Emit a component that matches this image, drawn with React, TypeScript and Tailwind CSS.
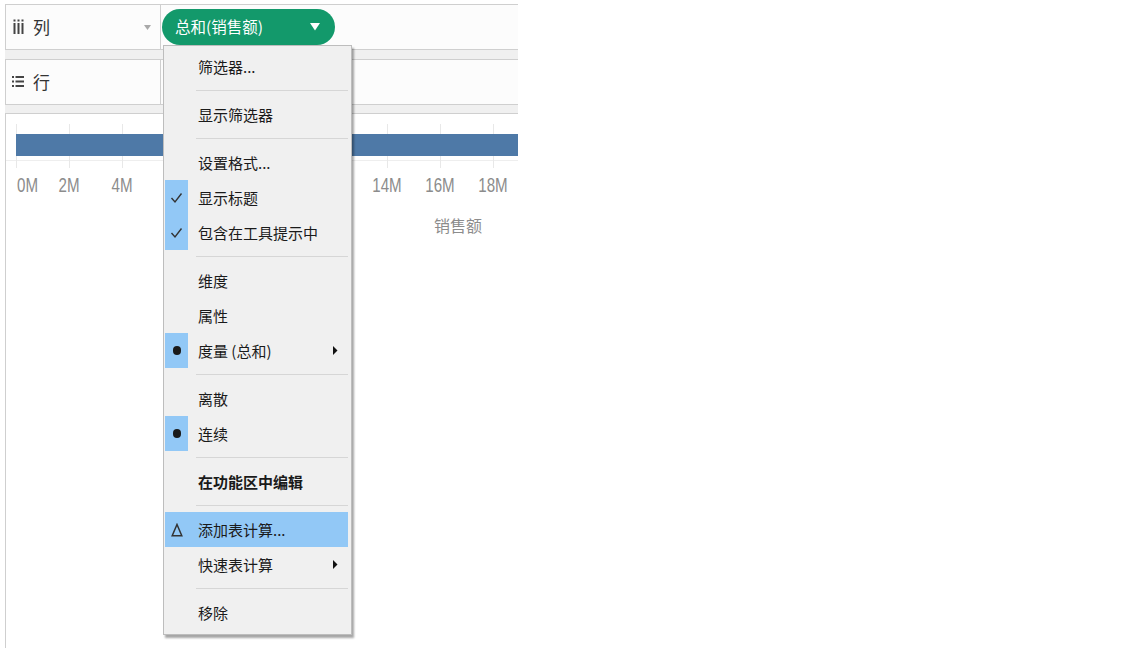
import { ReactNode } from 'react';

const FONT = "font-['Noto_Sans_CJK_SC','Noto_Sans',sans-serif]";
const ticks = [0, 2, 4, 6, 8, 10, 12, 14, 16, 18];
// labels for 6M-12M sit under the open menu
const shownTicks = [0, 2, 4, 14, 16, 18];

function ColumnsIcon() {
  return (
    <svg width="11" height="16" viewBox="0 0 11 16" className="shrink-0">
      {[0, 4, 8].map((x) => (
        <g key={x} fill="#444">
          <rect x={x + 0.5} y="0.5" width="2" height="2" />
          <rect x={x + 0.5} y="4" width="2" height="11" />
        </g>
      ))}
    </svg>
  );
}

function RowsIcon() {
  return (
    <svg width="12" height="12" viewBox="0 0 12 12" className="shrink-0">
      {[1, 5.5, 10].map((y) => (
        <g key={y} fill="#444">
          <rect x="0" y={y - 1} width="2" height="2" />
          <rect x="3.5" y={y - 1} width="8.5" height="2" />
        </g>
      ))}
    </svg>
  );
}

function Check() {
  return (
    <svg width="13" height="12" viewBox="0 0 13 12">
      <path d="M1.5 6 L5 10 L11.5 1.5" fill="none" stroke="#333" strokeWidth="1.4" />
    </svg>
  );
}

function Dot() {
  return <span className="block w-[8px] h-[9px] rounded-full bg-[#1a1a1a]" />;
}

function Delta() {
  return (
    <svg width="12" height="14" viewBox="0 0 12 14">
      <path d="M6 1.5 L10.8 12.8 L1.2 12.8 Z" fill="none" stroke="#333" strokeWidth="1.5" strokeLinejoin="miter" />
    </svg>
  );
}

function SubArrow() {
  return (
    <svg width="5" height="9" viewBox="0 0 5 9" className="ml-auto mr-[10px]">
      <path d="M0 0 L4.5 4.5 L0 9 Z" fill="#111" />
    </svg>
  );
}

interface ItemProps {
  label: string;
  icon?: ReactNode;
  sub?: boolean;
  bold?: boolean;
  active?: boolean;
}

function Item({ label, icon, sub, bold, active }: ItemProps) {
  return (
    <div className={`h-[35px] flex items-center mr-[3px] ${active ? 'bg-[#92c8f6]' : ''}`}>
      <div className={`w-[23px] h-full flex items-center justify-center ${icon ? 'bg-[#92c8f6]' : ''}`}>
        {icon}
      </div>
      <span className={`ml-[10px] text-[15px] leading-none text-[#1a1a1a] ${bold ? 'font-bold' : ''}`}>{label}</span>
      {sub && <SubArrow />}
    </div>
  );
}

function Separator() {
  return (
    <div className="h-[13px] flex items-center pl-[31px] pr-[3px]">
      <div className="w-full border-t border-[#d6d6d6]" />
    </div>
  );
}

function ContextMenu() {
  return (
    <div className={`absolute left-[163px] top-[45px] w-[189px] h-[590px] bg-[#f0f0f0] border border-[#bdbdbd] pl-[1px] pt-[3px] shadow-[2px_3px_2px_rgba(0,0,0,0.35)] ${FONT}`}>
      <Item label="筛选器..." />
      <Separator />
      <Item label="显示筛选器" />
      <Separator />
      <Item label="设置格式..." />
      <Item label="显示标题" icon={<Check />} />
      <Item label="包含在工具提示中" icon={<Check />} />
      <Separator />
      <Item label="维度" />
      <Item label="属性" />
      <Item label="度量 (总和)" icon={<Dot />} sub />
      <Separator />
      <Item label="离散" />
      <Item label="连续" icon={<Dot />} />
      <Separator />
      <Item label="在功能区中编辑" bold />
      <Separator />
      <Item label="添加表计算..." icon={<Delta />} active />
      <Item label="快速表计算" sub />
      <Separator />
      <Item label="移除" />
    </div>
  );
}

export default function App() {
  return (
    <div className={`relative w-[1145px] h-[648px] bg-white overflow-hidden ${FONT}`}>
      <div className="ml-[5px] mt-[4px] w-[513px] h-[644px] flex flex-col bg-[#f0f0f0]">
        {/* Columns shelf */}
        <div className="h-[46px] flex items-center bg-[#fcfcfc] border border-r-0 border-[#cfcfcf]">
          <div className="w-[155px] h-full flex items-center border-r border-[#cfcfcf] pl-[7px] pr-[9px]">
            <ColumnsIcon />
            <span className="ml-[9px] text-[17px] text-[#333]">列</span>
            <svg width="7" height="5" viewBox="0 0 7 5" className="ml-auto">
              <path d="M0 0 L7 0 L3.5 5 Z" fill="#a9a9a9" />
            </svg>
          </div>
          <div className="ml-[1px] w-[173px] h-[36px] rounded-full bg-[#13996b] flex items-center pl-[13px] pr-[15px]">
            <span className="text-[15.5px] text-white leading-none">总和(销售额)</span>
            <svg width="10" height="8" viewBox="0 0 10 8" className="ml-auto">
              <path d="M0 0 L10 0 L5 7.5 Z" fill="#fff" />
            </svg>
          </div>
        </div>
        <div className="h-[9px]" />
        {/* Rows shelf */}
        <div className="h-[46px] flex items-center bg-[#fcfcfc] border border-r-0 border-[#cfcfcf]">
          <div className="w-[155px] h-full flex items-center border-r border-[#cfcfcf] pl-[6px]">
            <RowsIcon />
            <span className="ml-[9px] text-[17px] text-[#333]">行</span>
          </div>
        </div>
        <div className="h-[8px]" />
        {/* Chart pane */}
        <div className="flex-1 bg-white border-l border-t border-[#cfcfcf] relative">
          <div className="absolute left-0 right-0 top-[46px] border-t border-[#eeeeee]" />
          {ticks.map((t, i) => (
            <div
              key={t}
              className="absolute top-[10px] h-[44px] border-l border-[#e8e8e8]"
              style={{ left: 10 + 53 * i }}
            />
          ))}
          <div className="relative mt-[20px] ml-[10px] h-[22px] bg-[#4e79a7]" />
          <div className="relative h-[42px]">
            {shownTicks.map((t) => (
              <span
                key={t}
                className={`absolute top-[18px] font-['Liberation_Sans',sans-serif] text-[21px] leading-none text-[#8c8c8c] scale-x-[0.72] whitespace-nowrap ${t === 0 ? 'origin-left' : '-translate-x-1/2 origin-center'}`}
                style={{ left: t === 0 ? 11 : 10 + 53 * (t / 2) }}
              >
                {t}M
              </span>
            ))}
          </div>
          <div className="ml-[428px] mt-[19px] text-[16px] leading-none text-[#8c8c8c]">销售额</div>
        </div>
      </div>
      <ContextMenu />
    </div>
  );
}
